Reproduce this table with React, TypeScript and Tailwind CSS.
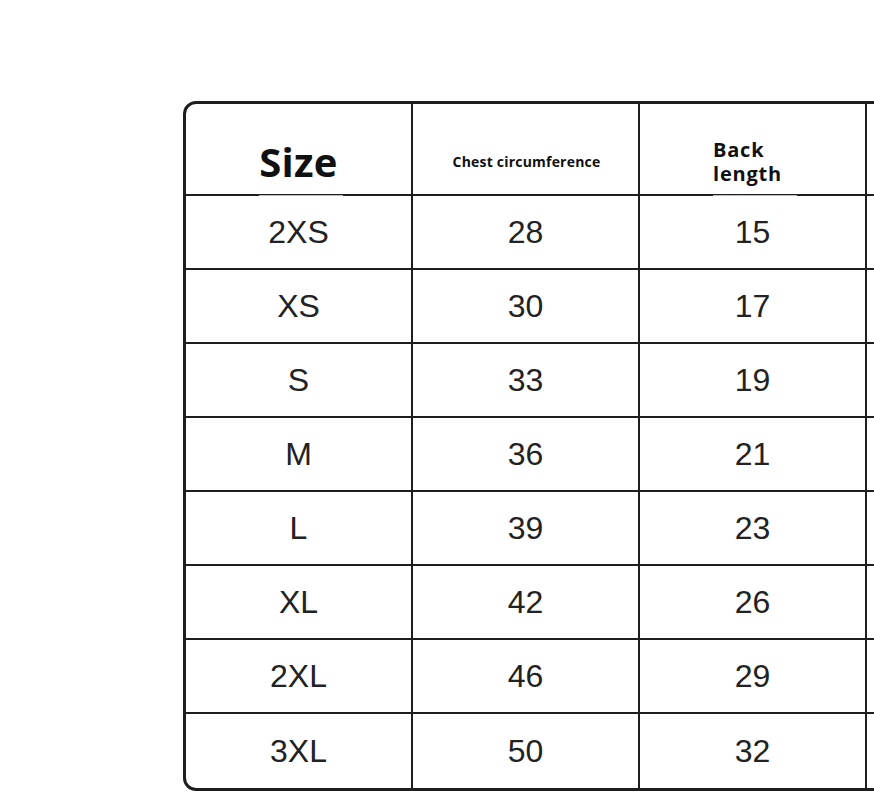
import React from "react";

const rows: [string, string, string][] = [
  ["2XS", "28", "15"],
  ["XS", "30", "17"],
  ["S", "33", "19"],
  ["M", "36", "21"],
  ["L", "39", "23"],
  ["XL", "42", "26"],
  ["2XL", "46", "29"],
  ["3XL", "50", "32"],
];

const body = { fontFamily: '"Liberation Sans", Arial, sans-serif' };
const head = { fontFamily: '"Open Sans", "Noto Sans", sans-serif' };

export default function App() {
  return (
    <div className="w-[874px] h-[800px] overflow-hidden bg-white pt-[101px] pl-[183px]">
      <div className="w-[1000px] border-[3px] border-[#1e1e1e] rounded-[13px] overflow-hidden">
        <div className="grid grid-cols-[227px_227px_227px_227px_100px]">
          {/* header */}
          <div className="relative h-[92px] border-r-2 border-b-2 border-[#1e1e1e] flex items-center justify-center pt-[26px]">
            <span style={head} className="text-[40px] font-bold leading-none text-[#111] tracking-[0.3px]">Size</span>
            <span className="absolute bottom-[-2px] left-[73px] w-[84px] h-[1px] bg-white/70" />
          </div>
          <div className="h-[92px] border-r-2 border-b-2 border-[#1e1e1e] flex items-center justify-center pt-[26px] pl-[2px]">
            <span style={head} className="text-[14px] font-bold leading-none text-[#111] tracking-[0.2px]">Chest circumference</span>
          </div>
          <div className="relative h-[92px] border-r-2 border-b-2 border-[#1e1e1e] flex items-center justify-center pt-[26px] pr-[10px]">
            <div style={head} className="text-[20px] font-bold text-[#111] tracking-[0.8px] text-left flex flex-col">
              <span className="leading-[24px] block">Back</span>
              <span className="leading-[24px] block">length</span>
            </div>
            <span className="absolute bottom-[-2px] left-[73px] w-[84px] h-[1px] bg-white/70" />
          </div>
          <div className="h-[92px] border-r-2 border-b-2 border-[#1e1e1e]" />
          <div className="h-[92px] border-b-2 border-[#1e1e1e]" />
          {rows.map((r, i) => {
            const last = i === rows.length - 1;
            const cell = `h-[74px] flex items-center justify-center border-r-2 border-[#1e1e1e] ${last ? "" : "border-b-2"}`;
            return (
              <React.Fragment key={r[0]}>
                <div className={cell}>
                  <span style={body} className="text-[32px] leading-none text-[#222]">{r[0]}</span>
                </div>
                <div className={cell}>
                  <span style={body} className="text-[32px] leading-none text-[#222]">{r[1]}</span>
                </div>
                <div className={cell}>
                  <span style={body} className="text-[32px] leading-none text-[#222]">{r[2]}</span>
                </div>
                <div className={cell} />
                <div className={`h-[74px] border-[#1e1e1e] ${last ? "" : "border-b-2"}`} />
              </React.Fragment>
            );
          })}
        </div>
      </div>
    </div>
  );
}
